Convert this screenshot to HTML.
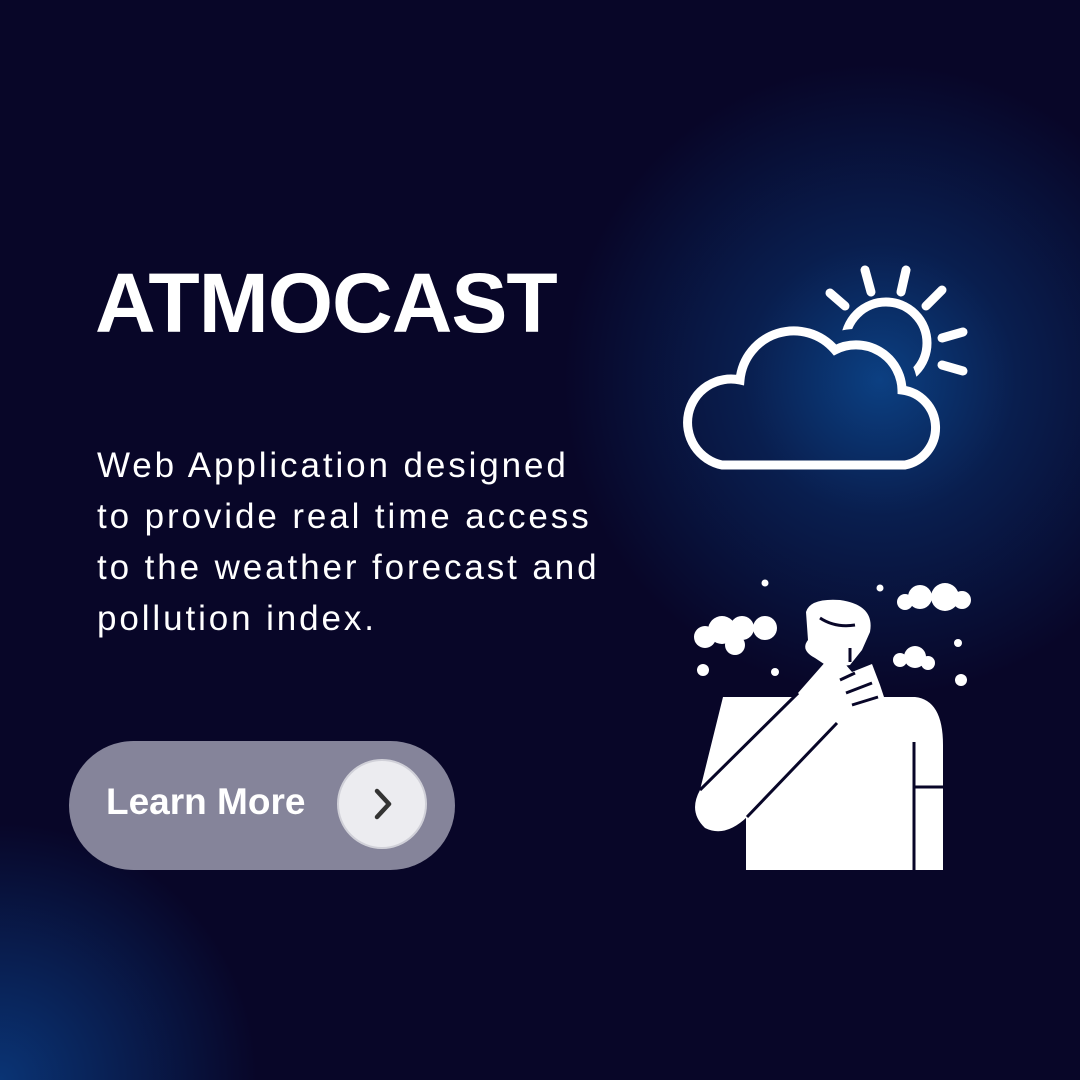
<!DOCTYPE html>
<html><head><style>
html,body{margin:0;padding:0;width:1080px;height:1080px;overflow:hidden}
#w{width:1080px;height:1080px;overflow:hidden;position:relative;background:#080628;font-family:"Liberation Sans",sans-serif}
.g1{position:absolute;left:560px;top:60px;width:640px;height:640px;border-radius:50%;background:radial-gradient(circle,rgba(12,70,140,0.9) 0%,rgba(10,50,110,0.55) 30%,rgba(8,6,40,0) 70%)}
.g2{position:absolute;left:-260px;top:820px;width:520px;height:260px;border-radius:260px 260px 0 0;background:radial-gradient(circle at 50% 100%,rgba(10,60,130,0.85) 0%,rgba(8,6,40,0) 70%)}
h1{position:absolute;left:95px;top:255px;margin:0;color:#fff;font-size:84px;font-weight:bold;letter-spacing:-1px}
p{position:absolute;left:97px;top:440px;margin:0;color:#fff;font-size:35px;line-height:51px;letter-spacing:2.9px;font-weight:normal;white-space:nowrap}
.btn{position:absolute;left:69px;top:741px;width:386px;height:129px;border-radius:65px;background:#85849a}
.btn span{position:absolute;left:37px;top:40px;color:#fff;font-weight:bold;font-size:37px}
.c{position:absolute;left:337px;top:759px;width:86px;height:86px;border-radius:50%;background:#ececf0;border:2px solid #d0d0d8}
</style></head><body><div id="w">
<div class="g1"></div><div class="g2"></div>
<h1>ATMOCAST</h1>
<p>Web Application designed<br>to provide real time access<br>to the weather forecast and<br>pollution index.</p>
<div class="btn"><span>Learn More</span></div>
<div class="c"><svg width="86" height="86"><path d="M38 30 L50 43 L38 56" fill="none" stroke="#333" stroke-width="4.5" stroke-linecap="round" stroke-linejoin="round"/></svg></div>
<svg style="position:absolute;left:0;top:0" width="1080" height="1080">
<defs><mask id="m"><rect width="1080" height="1080" fill="#fff"/><path d="M722 465 H905 A38 38 0 0 0 902 390 A46 46 0 0 0 835 350 A54 54 0 0 0 740 380 A43 43 0 0 0 722 465 Z" fill="#000" stroke="#000" stroke-width="32"/></mask></defs>
<g fill="none" stroke="#fff" stroke-width="9" stroke-linecap="round">
<line x1="830" y1="293" x2="845" y2="306"/><line x1="865" y1="270" x2="871" y2="292"/><line x1="906" y1="270" x2="901" y2="292"/><line x1="942" y1="290" x2="926" y2="306"/><line x1="942" y1="338" x2="963" y2="332"/><line x1="942" y1="365" x2="963" y2="371"/>
<circle cx="886" cy="343" r="41" mask="url(#m)"/>
<path d="M722 465 H905 A38 38 0 0 0 902 390 A46 46 0 0 0 835 350 A54 54 0 0 0 740 380 A43 43 0 0 0 722 465 Z"/>
</g>
<g fill="#fff">
<path d="M723 697 L915 697 Q943 700 943 745 L943 870 L746 870 L746 815 L700 790 Z"/>
<path d="M700 790 L798 693 L827 660 L840 658 L852 672 L872 664 L880 685 L885 700 L865 718 L837 723 L747 817 Q725 838 705 828 Q688 812 700 790 Z"/>
<path d="M806 612 Q810 598 840 600 Q875 605 870 632 L862 650 L850 665 L830 668 L815 658 Q800 650 808 640 Z"/>
<circle cx="722" cy="630" r="14"/><circle cx="742" cy="628" r="12"/><circle cx="765" cy="628" r="12"/><circle cx="705" cy="637" r="11"/><circle cx="735" cy="645" r="10"/>
<circle cx="920" cy="597" r="12"/><circle cx="945" cy="597" r="14"/><circle cx="962" cy="600" r="9"/><circle cx="905" cy="602" r="8"/>
<circle cx="915" cy="657" r="11"/><circle cx="900" cy="660" r="7"/><circle cx="928" cy="663" r="7"/>
<circle cx="765" cy="583" r="3.5"/><circle cx="880" cy="588" r="3.5"/><circle cx="703" cy="670" r="6"/><circle cx="775" cy="672" r="4"/><circle cx="958" cy="643" r="4"/><circle cx="961" cy="680" r="6"/>
</g>
<g stroke="#080628" stroke-width="3" fill="none">
<line x1="914" y1="742" x2="914" y2="870"/><line x1="914" y1="787" x2="943" y2="787"/>
<line x1="747" y1="817" x2="837" y2="723"/>
<line x1="840" y1="680" x2="855" y2="673"/><line x1="846" y1="693" x2="872" y2="683"/><line x1="852" y1="705" x2="878" y2="697"/>
<line x1="700" y1="790" x2="798" y2="693"/>
<path d="M820 618 Q835 628 855 625"/><line x1="850" y1="648" x2="850" y2="662"/>
</g>
</svg>
</div></body></html>
